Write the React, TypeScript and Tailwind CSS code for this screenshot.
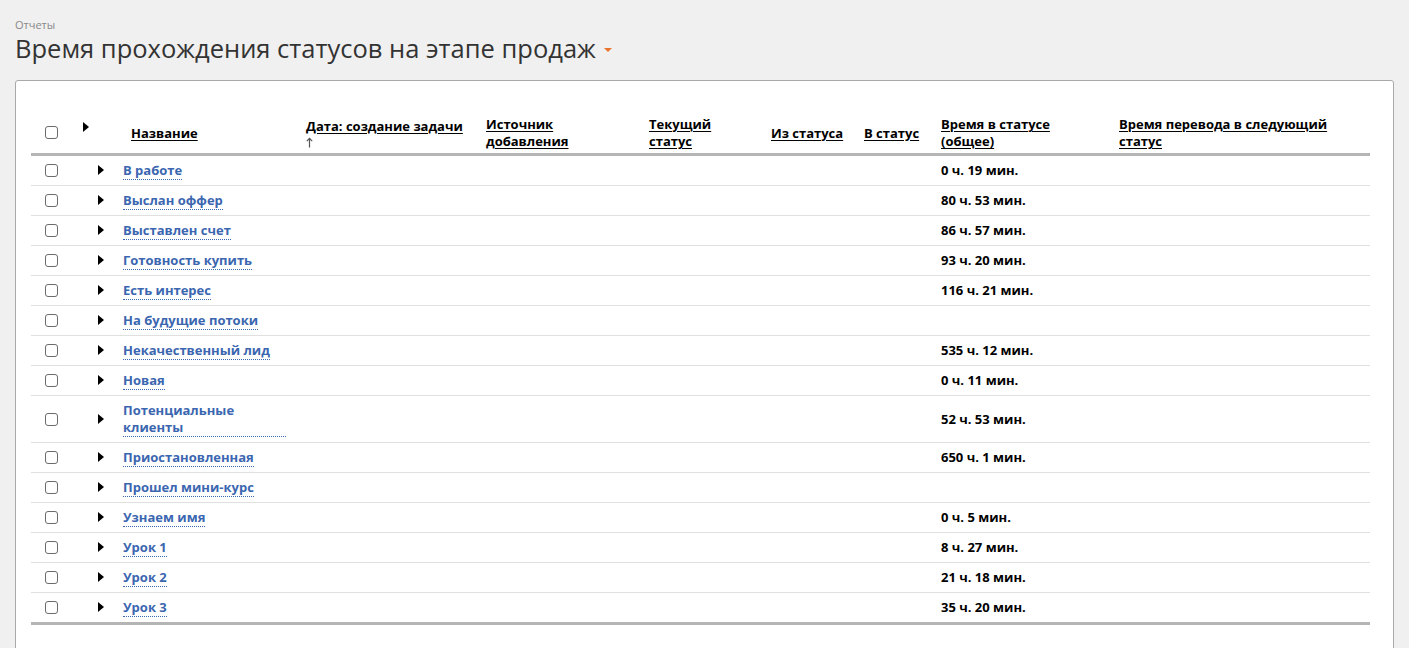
import React from "react";

type Row = { name: string; time: string };

const rows: Row[] = [
  { name: "В работе", time: "0 ч. 19 мин." },
  { name: "Выслан оффер", time: "80 ч. 53 мин." },
  { name: "Выставлен счет", time: "86 ч. 57 мин." },
  { name: "Готовность купить", time: "93 ч. 20 мин." },
  { name: "Есть интерес", time: "116 ч. 21 мин." },
  { name: "На будущие потоки", time: "" },
  { name: "Некачественный лид", time: "535 ч. 12 мин." },
  { name: "Новая", time: "0 ч. 11 мин." },
  { name: "Потенциальные клиенты", time: "52 ч. 53 мин." },
  { name: "Приостановленная", time: "650 ч. 1 мин." },
  { name: "Прошел мини-курс", time: "" },
  { name: "Узнаем имя", time: "0 ч. 5 мин." },
  { name: "Урок 1", time: "8 ч. 27 мин." },
  { name: "Урок 2", time: "21 ч. 18 мин." },
  { name: "Урок 3", time: "35 ч. 20 мин." },
];

function Box() {
  return <span className="block h-[13px] w-[13px] rounded-[3px] border border-[#6b6b6b] bg-white" />;
}

function Caret() {
  return <span className="inline-block h-0 w-0 border-y-[5px] border-l-[6px] border-y-transparent border-l-black" />;
}

function SortUp() {
  return (
    <svg width="7" height="11" viewBox="0 0 7 11" className="mt-[2px] block" aria-hidden="true">
      <path d="M3.5 1.5V10.5M0.8 4.2L3.5 1.3L6.2 4.2" fill="none" stroke="#555" strokeWidth="1.2" />
    </svg>
  );
}

const th = "px-[5px] pt-[5px] pb-[3px] text-left align-middle font-bold text-black";
const hl = "underline underline-offset-2 decoration-1";

export default function App() {
  return (
    <div className="min-h-[648px] bg-[#f0f0f0] px-[15px] pt-[18px] text-[13px] leading-[17px] text-[#222] [font-family:'Open_Sans',sans-serif]">
      <div className="text-[11px] leading-[14px] text-[#888]">Отчеты</div>
      <h1 className="flex items-center gap-[8px] text-[25.5px] leading-[33px] text-[#333]">
        Время прохождения статусов на этапе продаж
        <span className="mt-[3px] inline-block h-0 w-0 border-x-[4px] border-t-[4px] border-x-transparent border-t-[#e8742e]" />
      </h1>
      <div className="mt-[15px] h-[600px] rounded-t-[3px] border border-[#a8a8a8] bg-white pl-[15px] pr-[23px] pt-[30px]">
        <table className="w-full table-fixed border-collapse">
          <colgroup>
            <col className="w-[47px]" />
            <col className="w-[40px]" />
            <col className="w-[183px]" />
            <col className="w-[180px]" />
            <col className="w-[163px]" />
            <col className="w-[122px]" />
            <col className="w-[93px]" />
            <col className="w-[77px]" />
            <col className="w-[178px]" />
            <col />
          </colgroup>
          <thead>
            <tr className="border-b-[3px] border-[#b5b5b5]">
              <th className="pl-[14px] align-middle">
                <Box />
              </th>
              <th className="px-[5px] pt-[8px] text-left align-top">
                <Caret />
              </th>
              <th className={th + " pl-[13px]"}>
                <span className={hl}>Название</span>
              </th>
              <th className={th}>
                <span className={hl}>Дата: создание задачи</span>
                <SortUp />
              </th>
              <th className={th}>
                <span className={hl}>Источник</span>
                <br />
                <span className={hl}>добавления</span>
              </th>
              <th className={th}>
                <span className={hl}>Текущий</span>
                <br />
                <span className={hl}>статус</span>
              </th>
              <th className={th}>
                <span className={hl}>Из статуса</span>
              </th>
              <th className={th}>
                <span className={hl}>В статус</span>
              </th>
              <th className={th}>
                <span className={hl}>Время в статусе</span>
                <br />
                <span className={hl}>(общее)</span>
              </th>
              <th className={th}>
                <span className={hl}>Время перевода в следующий</span>
                <br />
                <span className={hl}>статус</span>
              </th>
            </tr>
          </thead>
          <tbody className="border-b-[3px] border-[#b5b5b5]">
            {rows.map((row, i) => (
              <tr key={row.name} className={i < rows.length - 1 ? "border-b border-[#e0e0e0]" : ""}>
                <td className="pl-[14px] align-middle">
                  <Box />
                </td>
                <td className="pl-[20px] align-middle">
                  <Caret />
                </td>
                <td className="pt-[6px] pb-[5px] pl-[5px] pr-[15px] align-middle">
                  <a className="inline-block border-b border-dotted border-[#3b66b0] font-bold leading-[17px] text-[#3b66b0]">
                    {row.name}
                  </a>
                </td>
                <td />
                <td />
                <td />
                <td />
                <td />
                <td className="px-[5px] align-middle font-bold text-black">{row.time}</td>
                <td />
              </tr>
            ))}
          </tbody>
        </table>
      </div>
    </div>
  );
}
